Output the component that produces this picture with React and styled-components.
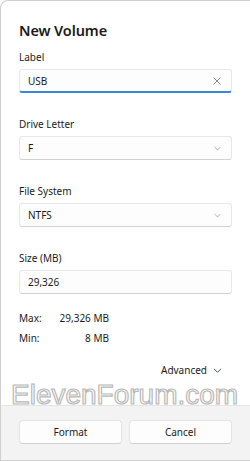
import React from 'react';
import styled, { createGlobalStyle } from 'styled-components';

const GlobalStyle = createGlobalStyle`
  html, body {
    margin: 0;
    padding: 0;
    background: #ffffff;
  }
  body {
    font-family: "Noto Sans", "Open Sans", sans-serif;
    color: #1b1b1b;
  }
`;

const Dialog = styled.div`
  position: relative;
  width: 250px;
  height: 461px;
  box-sizing: border-box;
  border: 1px solid #cfcfcf;
  border-right: none;
  border-radius: 8px 0 0 0;
  display: flex;
  flex-direction: column;
  overflow: hidden;
  background: #ffffff;
`;

const Body = styled.div`
  flex: 1;
  padding: 19px 18px 0 18px;
  display: flex;
  flex-direction: column;
`;

const Title = styled.h1`
  margin: 0 0 9px 0;
  font-size: 14.5px;
  line-height: 20px;
  font-weight: 600;
  letter-spacing: -0.1px;
`;

const Field = styled.div`
  display: flex;
  flex-direction: column;
  margin-bottom: 23px;
`;

const FieldLabel = styled.div`
  font-size: 10px;
  line-height: 16px;
  margin-bottom: 4px;
`;

const Box = styled.div`
  height: 24px;
  box-sizing: border-box;
  display: flex;
  align-items: center;
  justify-content: space-between;
  padding: 0 10px 0 8px;
  background: #fdfdfd;
  border: 1px solid #e8e8e8;
  border-bottom: ${p => (p.$focused ? '2px solid #3a86d8' : '1px solid #d2d2d2')};
  border-radius: 3px;
  font-size: 10px;
`;

const Stats = styled.div`
  display: grid;
  grid-template-columns: 40px 50px;
  margin-top: -9px;
  font-size: 10px;
  line-height: 20px;
  white-space: nowrap;
`;

const StatValue = styled.span`
  text-align: right;
`;

const AdvancedRow = styled.div`
  display: flex;
  justify-content: flex-end;
  align-items: center;
  gap: 6px;
  margin-top: 11px;
  padding-right: 10px;
  font-size: 10px;
  line-height: 22px;
`;

const Footer = styled.div`
  height: 55px;
  box-sizing: border-box;
  background: #f3f3f3;
  border-top: 1px solid #e6e6e6;
  padding: 14px 18px 0 18px;
  display: grid;
  grid-template-columns: 1fr 1fr;
  column-gap: 7px;
  align-items: start;
`;

const Button = styled.button`
  height: 24px;
  border: 1px solid #e3e3e3;
  border-bottom-color: #d0d0d0;
  border-radius: 4px;
  background: #fdfdfd;
  font-family: inherit;
  font-size: 10px;
  color: #1b1b1b;
  padding: 0;
`;

const Watermark = styled.div`
  position: absolute;
  left: 10px;
  top: 377px;
  font-family: "Liberation Sans", Arial, sans-serif;
  font-size: 28px;
  line-height: 34px;
  color: #ffffff;
  -webkit-text-stroke: 1.2px #b9b9b9;
  pointer-events: none;
  white-space: nowrap;
`;

const Chevron = ({ size = 8, color = '#6b6b6b' }) => (
  <svg width={size} height={size} viewBox="0 0 10 10" fill="none">
    <path d="M1.5 3.5 L5 7 L8.5 3.5" stroke={color} strokeWidth="1" strokeLinecap="round" strokeLinejoin="round" />
  </svg>
);

const Clear = () => (
  <svg width="8" height="8" viewBox="0 0 8 8" fill="none">
    <path d="M0.8 0.8 L7.2 7.2 M7.2 0.8 L0.8 7.2" stroke="#7a7a7a" strokeWidth="0.9" strokeLinecap="round" />
  </svg>
);

const App = () => {
  return (
    <>
      <GlobalStyle />
      <Dialog>
        <Body>
          <Title>New Volume</Title>
          <Field>
            <FieldLabel>Label</FieldLabel>
            <Box $focused>
              <span>USB</span>
              <Clear />
            </Box>
          </Field>
          <Field>
            <FieldLabel>Drive Letter</FieldLabel>
            <Box>
              <span>F</span>
              <Chevron size={7} color="#8a8a8a" />
            </Box>
          </Field>
          <Field>
            <FieldLabel>File System</FieldLabel>
            <Box>
              <span>NTFS</span>
              <Chevron size={7} color="#8a8a8a" />
            </Box>
          </Field>
          <Field>
            <FieldLabel>Size (MB)</FieldLabel>
            <Box>
              <span>29,326</span>
            </Box>
          </Field>
          <Stats>
            <span>Max:</span>
            <StatValue>29,326 MB</StatValue>
            <span>Min:</span>
            <StatValue>8 MB</StatValue>
          </Stats>
          <AdvancedRow>
            <span>Advanced</span>
            <Chevron size={9} color="#404040" />
          </AdvancedRow>
        </Body>
        <Footer>
          <Button>Format</Button>
          <Button>Cancel</Button>
        </Footer>
        <Watermark>ElevenForum.com</Watermark>
      </Dialog>
    </>
  );
};

export default App;
